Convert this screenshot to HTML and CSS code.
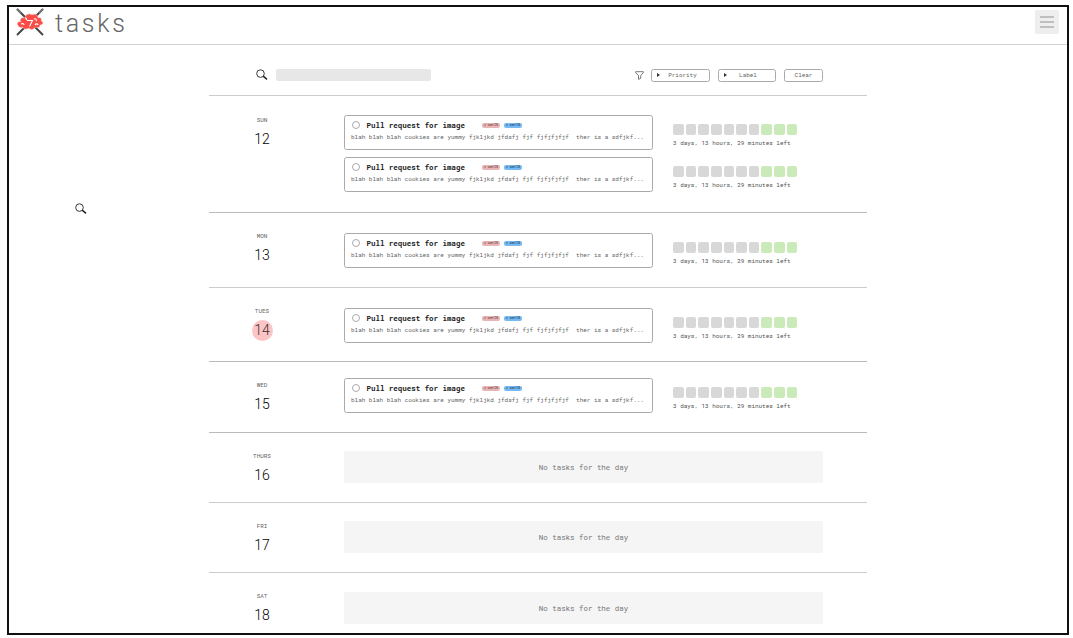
FILE: index.html
```html
<!DOCTYPE html>
<html lang="en">
<head>
<meta charset="utf-8">
<title>tasks</title>
<link rel="stylesheet" href="styles.css">
</head>
<body>
<svg class="defs" width="0" height="0">
  <symbol id="search" viewBox="0 0 12 12">
    <circle cx="4.5" cy="4.6" r="3.8" fill="none" stroke="currentColor" stroke-width=".9"/>
    <path d="M7.2 7.2 11 10.3" fill="none" stroke="currentColor" stroke-width="1.5"/>
  </symbol>
</svg>
<div class="frame">
  <header class="header">
    <svg class="logo" viewBox="0 0 28 28">
      <path d="M1 1 27 27M27 1 1 27" stroke="#444" stroke-width="1.9"/>
      <path d="M1 1 5 5M27 1 23 5" stroke="#777" stroke-width="2"/>
      <path d="M2 17c-2-2 1-4 3-3-2-3 1-5 4-4 0-4 5-5 7-3 3-2 6 0 6 3 3-1 4 1 3 3 3 1 2 4-1 4 0 3-3 3-5 2-1 3-5 3-6 1-3 2-6 1-6-1-2 1-5 0-5-2z" fill="#fa4b46" stroke="#eeb5b0" stroke-width=".6"/>
      <path d="M11 12.500h5.500l-3 6M5 16c2-1 3 0 3 1M9 10c2 0 2 1 1 2M18 11c2-1 3 1 2 2M19 17c1-2 3-1 3 0" fill="none" stroke="#fff" stroke-width="1.100"/>
    </svg>
    <h1 class="brand">tasks</h1>
    <button class="menu" aria-label="Menu"><i></i><i></i><i></i></button>
  </header>
  <svg class="float-search"><use href="#search"/></svg>
  <main class="main">
    <div class="toolbar">
      <svg class="search-icon"><use href="#search"/></svg>
      <div class="search-field"></div>
      <svg class="filter" viewBox="0 0 9 9"><path d="M.7.7h7.600v1L5.700 4.700v2.700L3.500 8.300V4.700L.7 1.700z" fill="none" stroke="#555" stroke-width=".8"/></svg>
      <button class="btn priority"><b></b><span>Priority</span></button>
      <button class="btn label"><b></b><span>Label</span></button>
      <button class="btn clear"><span>Clear</span></button>
    </div>
    <div id="days"></div>
  </main>
</div>
<script src="app.js"></script>
</body>
</html>
```

FILE: styles.css
```css
* { box-sizing: border-box; }
body { margin: 0; background: #fff; font-family: "Roboto Mono", "DejaVu Sans Mono", monospace; color: #222; overflow: hidden; }
.defs { display: block; height: 0; }
.frame { position: relative; width: 1062px; height: 630px; margin: 5px 0 0 7px; border: 2px solid #111; overflow: hidden; }
.header { display: flex; align-items: flex-start; height: 38px; border-bottom: 1px solid #d2d2d2; }
.logo { width: 28px; height: 28px; margin: 1px 0 0 7px; flex: none; }
.brand { margin: 1px 0 0 11px; font: 300 25px/32px Roboto, sans-serif; letter-spacing: 2.7px; color: #666; }
.menu { display: flex; flex-direction: column; align-items: center; justify-content: center; gap: 3px; width: 24px; height: 24px; margin: 3px 8px 0 auto; padding: 0; border: 0; border-radius: 2px; background: #eee; }
.menu i { width: 14px; height: 2px; background: #bfbfbf; }
.float-search { position: absolute; left: 66px; top: 196px; width: 12px; height: 12px; }
.main { width: 658px; margin-left: 200px; }
.toolbar { display: flex; align-items: center; height: 51px; padding: 10px 44px 0 47px; border-bottom: 1px solid #ccc; }
.search-icon { width: 12px; height: 12px; }
.search-field { width: 155px; height: 12px; margin-left: 8px; border-radius: 2px; background: #e7e7e7; }
.filter { width: 9px; height: 9px; margin: 0 7px 0 auto; }
.btn { display: flex; align-items: center; height: 13px; padding: 0; border: 1px solid #aaa; border-radius: 2.5px; background: #fff; font: 5.95px/10px "Roboto Mono", "DejaVu Sans Mono", monospace; color: #666; }
.btn b { margin-left: 5px; border: solid transparent; border-width: 2px 0 2px 3.500px; border-left-color: #333; }
.btn span { flex: 1; text-align: center; }
.priority { width: 59px; }
.label { width: 58px; margin: 0 8.500px 0 8px; }
.priority span { padding-right: 3px; }
.label span { padding-right: 5px; }
.clear { width: 39px; }
.day { display: flex; border-bottom: 1px solid #ccc; }
.day.strong { border-color: #bbb; }
.date { width: 106px; margin-right: 29px; text-align: center; flex: none; }
.name { font-size: 5.95px; line-height: 10px; color: #666; }
.number { width: 21px; height: 21px; margin: 4px auto 0; border-radius: 50%; font: 300 14px/21px Roboto, sans-serif; color: #000; }
.number.today { background: #fcc4c4; color: #333; }
.tasks { display: flex; flex-direction: column; gap: 7px; }
.task { display: flex; height: 35px; }
.card { width: 309px; padding: 4px 6px; border: 1px solid #aaa; border-radius: 2.500px; }
.top { display: flex; align-items: center; height: 10px; }
.check { width: 8px; height: 8px; margin: 0 6.500px 0 1px; border: 1px solid #aaa; border-radius: 50%; }
.title { width: 115.500px; font-size: 7.460px; font-weight: 700; line-height: 10px; color: #222; white-space: pre; }
.chip { width: 18px; height: 5px; margin-right: 4px; border-radius: 2px; background: #e8b5b5; color: #533; font-size: 2.900px; line-height: 5px; text-align: center; white-space: pre; }
.chip.blue { background: #76b9f4; color: #134; }
.text { margin-top: 3px; font-size: 5.960px; line-height: 9px; color: #666; white-space: pre; }
.progress { padding: 9px 0 0 20px; }
.blocks { display: flex; gap: 2px; }
.blocks i { width: 10.650px; height: 11px; border-radius: 2px; background: #d8d8d8; }
.blocks i.left { background: #caebb9; }
.time { margin-top: 3px; font-size: 5.950px; line-height: 10px; color: #555; white-space: pre; }
.empty { width: 479px; height: 32px; border-radius: 2px; background: #f5f5f5; font-size: 7.450px; line-height: 33px; text-align: center; color: #777; }
```

FILE: app.js
```js
const days = [
  { name: 'SUN', number: 12, tasks: 2, height: 117, top: 19, date: 19, strong: true },
  { name: 'MON', number: 13, tasks: 1, height: 75, top: 20, date: 18 },
  { name: 'TUES', number: 14, tasks: 1, height: 74, top: 20, date: 18, today: true, strong: true },
  { name: 'WED', number: 15, tasks: 1, height: 71, top: 16, date: 18, strong: true },
  { name: 'THURS', number: 16, tasks: 0, height: 70, top: 18, date: 18 },
  { name: 'FRI', number: 17, tasks: 0, height: 70, top: 18, date: 18 },
  { name: 'SAT', number: 18, tasks: 0, height: 70, top: 19, date: 18 }
];

const blocks = '<i></i>'.repeat(7) + '<i class="left"></i>'.repeat(3);
const task = `<div class="task">
  <div class="card">
    <div class="top"><span class="check"></span><span class="title">Pull request for image</span><span class="chip">x swe120</span><span class="chip blue">x swe120</span></div>
    <div class="text">blah blah blah cookies are yummy fjkljkd jfdsfj fjf fjfjfjfjf  ther is a sdfjkf...</div>
  </div>
  <div class="progress"><div class="blocks">${blocks}</div><div class="time">3 days, 13 hours, 29 minutes left</div></div>
</div>`;

document.getElementById('days').innerHTML = days.map(d => `
  <section class="day${d.strong ? ' strong' : ''}" style="height:${d.height}px">
    <div class="date" style="padding-top:${d.date}px"><div class="name">${d.name}</div><div class="number${d.today ? ' today' : ''}">${d.number}</div></div>
    <div class="tasks" style="padding-top:${d.top}px">${d.tasks ? task.repeat(d.tasks) : '<div class="empty">No tasks for the day</div>'}</div>
  </section>`).join('');
```
